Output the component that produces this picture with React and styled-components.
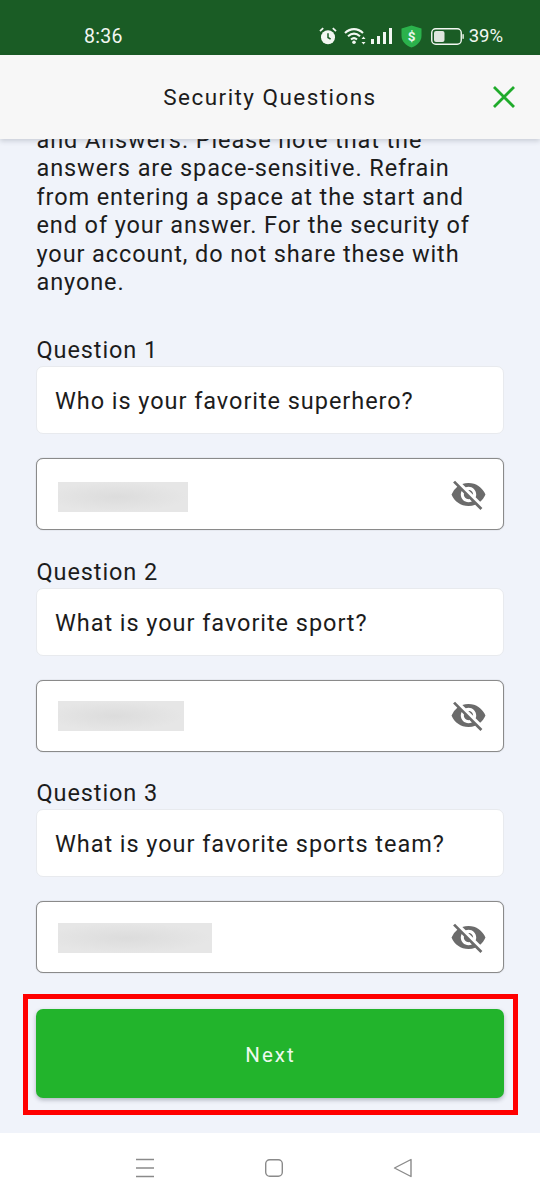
import React from "react";
import styled, { createGlobalStyle } from "styled-components";
import { MdVisibilityOff } from "react-icons/md";

const GlobalStyle = createGlobalStyle`
html, body {
    margin: 0;
    padding: 0;
    background: #f0f3fa;
    font-family: Roboto, "Liberation Sans", sans-serif;
}
* {
    box-sizing: border-box;
}
`;

const Screen = styled.div`
width: 540px;
height: 1200px;
display: flex;
flex-direction: column;
overflow: hidden;
background: #f0f3fa;
`;

const StatusBar = styled.div`
height: 55px;
flex: none;
display: flex;
align-items: center;
padding: 17px 37px 0 84px;
background: #1a5c25;
color: #f2f7f2;
`;

const Clock = styled.span`
font-size: 19.5px;
letter-spacing: 0.3px;
flex: 1;
`;

const StatusIcons = styled.div`
display: flex;
align-items: center;
`;

const IconSlot = styled.span`
display: flex;
margin-right: ${(props) => props.$gap}px;
`;

const Percent = styled.span`
font-size: 18.5px;
`;

const Header = styled.header`
position: relative;
z-index: 2;
height: 84px;
flex: none;
display: flex;
align-items: center;
justify-content: center;
background: #f7f7f7;
box-shadow: 0 2px 5px rgba(40, 50, 70, 0.2);
`;

const Title = styled.h1`
margin: 0;
font-size: 22.5px;
font-weight: 400;
letter-spacing: 1.45px;
color: #1c1c1c;
`;

const CloseButton = styled.span`
position: absolute;
right: 24px;
top: 30px;
width: 24px;
height: 24px;
`;

const Body = styled.main`
flex: 1;
min-height: 0;
display: flex;
flex-direction: column;
padding: 0 36px;
overflow: hidden;
`;

const Intro = styled.p`
width: 440px;
flex: none;
margin: -13.5px 0 38.5px 0.5px;
font-size: 23.5px;
line-height: 28.5px;
letter-spacing: 0.9px;
color: #1c1c1c;
`;

const Group = styled.section`
display: flex;
flex: none;
flex-direction: column;
margin-bottom: 26.5px;
`;

const Label = styled.label`
font-size: 23.5px;
line-height: 31px;
letter-spacing: 0.9px;
color: #1c1c1c;
margin-left: 0.5px;
`;

const QuestionField = styled.div`
height: 68px;
display: flex;
align-items: center;
padding: 2px 18px 0;
background: #fff;
border: 1px solid #e8eaee;
border-radius: 7px;
font-size: 23.5px;
letter-spacing: 0.95px;
color: #1c1c1c;
margin-bottom: 24px;
`;

const AnswerField = styled.div`
height: 72px;
display: flex;
align-items: center;
justify-content: space-between;
padding: 0 16px 0 21px;
background: #fff;
border: 1px solid #8a8a8a;
box-shadow: 0 0 1px rgba(90, 90, 90, 0.6);
border-radius: 7px;
color: #6b6b6b;
`;

const Redacted = styled.div`
height: 30px;
margin-top: ${(props) => props.$shift}px;
background: radial-gradient(ellipse at 45% 50%, #dcdcdc 0%, #e6e6e6 70%);
`;

const ButtonFrame = styled.div`
flex: none;
margin: -1px 22px 0 23px;
padding: 10px 9px 12px 8px;
border: 5px solid #ff0000;
`;

const NextButton = styled.button`
width: 100%;
height: 89px;
display: block;
border: none;
border-radius: 7px;
padding: 2px 0 0 1px;
background: #22b42c;
color: #eef9ee;
font-family: inherit;
font-size: 20.5px;
letter-spacing: 2px;
box-shadow: 0 2px 4px rgba(30, 40, 60, 0.3);
`;

const NavBar = styled.nav`
height: 67px;
flex: none;
margin-top: 18px;
display: flex;
align-items: center;
background: #fff;
padding: 2px 0 0 135px;
gap: 109px;
`;

const AlarmIcon = () => (
    <svg width="18" height="18" viewBox="0 0 18 18">
        <circle cx="9" cy="10.2" r="7" fill="#f2f7f2" />
        <path d="M9 6.2v4.3l2.6 1.7" stroke="#1a5c25" strokeWidth="1.5" fill="none" />
        <path d="M1 4.2 4.2 1.2M17 4.2 13.8 1.2" stroke="#f2f7f2" strokeWidth="1.8" />
    </svg>
);

const WifiIcon = () => (
    <svg width="23" height="18" viewBox="0 0 23 18" fill="none" stroke="#f2f7f2" strokeWidth="2.1">
        <path d="M1 6C6.5 0.8 13.5 0.8 19 6" />
        <path d="M4 9.3C7.8 5.8 12.2 5.8 16 9.3" />
        <path d="M7 12.5C8.9 10.8 11.1 10.8 13 12.5" />
        <circle cx="10" cy="15.3" r="1.8" fill="#f2f7f2" stroke="none" />
        <path d="M19.5 9.5l-2 2.4h4zM19.5 17.5l-2-2.4h4z" fill="#f2f7f2" stroke="none" />
    </svg>
);

const SignalIcon = () => (
    <svg width="21" height="16" viewBox="0 0 21 16" fill="#f2f7f2">
        <rect x="0" y="11" width="3" height="5" />
        <rect x="6" y="8" width="3" height="8" />
        <rect x="12" y="4" width="3" height="12" />
        <rect x="18" y="0" width="3" height="16" />
    </svg>
);

const ShieldIcon = () => (
    <svg width="21" height="23" viewBox="0 0 21 23">
        <path d="M10.5 0.5 20.5 3.5V11C20.5 16.5 16 20.5 10.5 22.5 5 20.5 0.5 16.5 0.5 11V3.5Z" fill="#2bb24c" />
        <text x="10.5" y="16" textAnchor="middle" fontFamily="Roboto, sans-serif" fontSize="13.5" fontWeight="700" fill="#eaf8ee">$</text>
    </svg>
);

const BatteryIcon = () => (
    <svg width="33" height="17" viewBox="0 0 33 17">
        <rect x="0.75" y="0.75" width="29.5" height="15.5" rx="4" fill="none" stroke="#f2f7f2" strokeWidth="1.4" />
        <rect x="3" y="3" width="10.5" height="11" rx="2" fill="#dfe6df" />
        <rect x="31.4" y="6" width="1.4" height="5" rx="0.7" fill="#f2f7f2" />
    </svg>
);

const CloseIcon = () => (
    <svg width="24" height="24" viewBox="0 0 24 24" fill="none" stroke="#1fab2b" strokeWidth="2.8">
        <path d="M2 2 22 22M22 2 2 22" />
    </svg>
);

const MenuIcon = () => (
    <svg width="20" height="20" viewBox="0 0 20 20" stroke="#8a8a8a" strokeWidth="1.4">
        <path d="M1 1.5H19M1 10H19M1 18.5H19" />
    </svg>
);

const HomeIcon = () => (
    <svg width="20" height="20" viewBox="0 0 20 20" fill="none" stroke="#8a8a8a" strokeWidth="1.4">
        <rect x="1.7" y="1.7" width="16.6" height="16.6" rx="4" />
    </svg>
);

const BackIcon = () => (
    <svg width="20" height="20" viewBox="0 0 20 20" fill="none" stroke="#8a8a8a" strokeWidth="1.4" strokeLinejoin="round">
        <path d="M18 1.5V18.5L1.5 10Z" />
    </svg>
);

const questions = [
    { id: 1, text: "Who is your favorite superhero?", width: 130, shift: 6 },
    { id: 2, text: "What is your favorite sport?", width: 126, shift: 0 },
    { id: 3, text: "What is your favorite sports team?", width: 154, shift: 2 },
];

const App = () => {
    return (
        <Screen>
            <GlobalStyle />
            <StatusBar>
                <Clock>8:36</Clock>
                <StatusIcons>
                    <IconSlot $gap={7}><AlarmIcon /></IconSlot>
                    <IconSlot $gap={4}><WifiIcon /></IconSlot>
                    <IconSlot $gap={9}><SignalIcon /></IconSlot>
                    <IconSlot $gap={9}><ShieldIcon /></IconSlot>
                    <IconSlot $gap={5}><BatteryIcon /></IconSlot>
                    <Percent>39%</Percent>
                </StatusIcons>
            </StatusBar>
            <Header>
                <Title>Security Questions</Title>
                <CloseButton>
                    <CloseIcon />
                </CloseButton>
            </Header>
            <Body>
                <Intro>
                    and Answers. Please note that the answers are space-sensitive. Refrain from entering a space at the start and end of your answer. For the security of your account, do not share these with anyone.
                </Intro>
                {questions.map((question) => (
                    <Group key={question.id}>
                        <Label>Question {question.id}</Label>
                        <QuestionField>{question.text}</QuestionField>
                        <AnswerField>
                            <Redacted $shift={question.shift} style={{ width: question.width }} />
                            <MdVisibilityOff size={37} />
                        </AnswerField>
                    </Group>
                ))}
            </Body>
            <ButtonFrame>
                <NextButton>Next</NextButton>
            </ButtonFrame>
            <NavBar>
                <MenuIcon />
                <HomeIcon />
                <BackIcon />
            </NavBar>
        </Screen>
    );
};

export default App;
